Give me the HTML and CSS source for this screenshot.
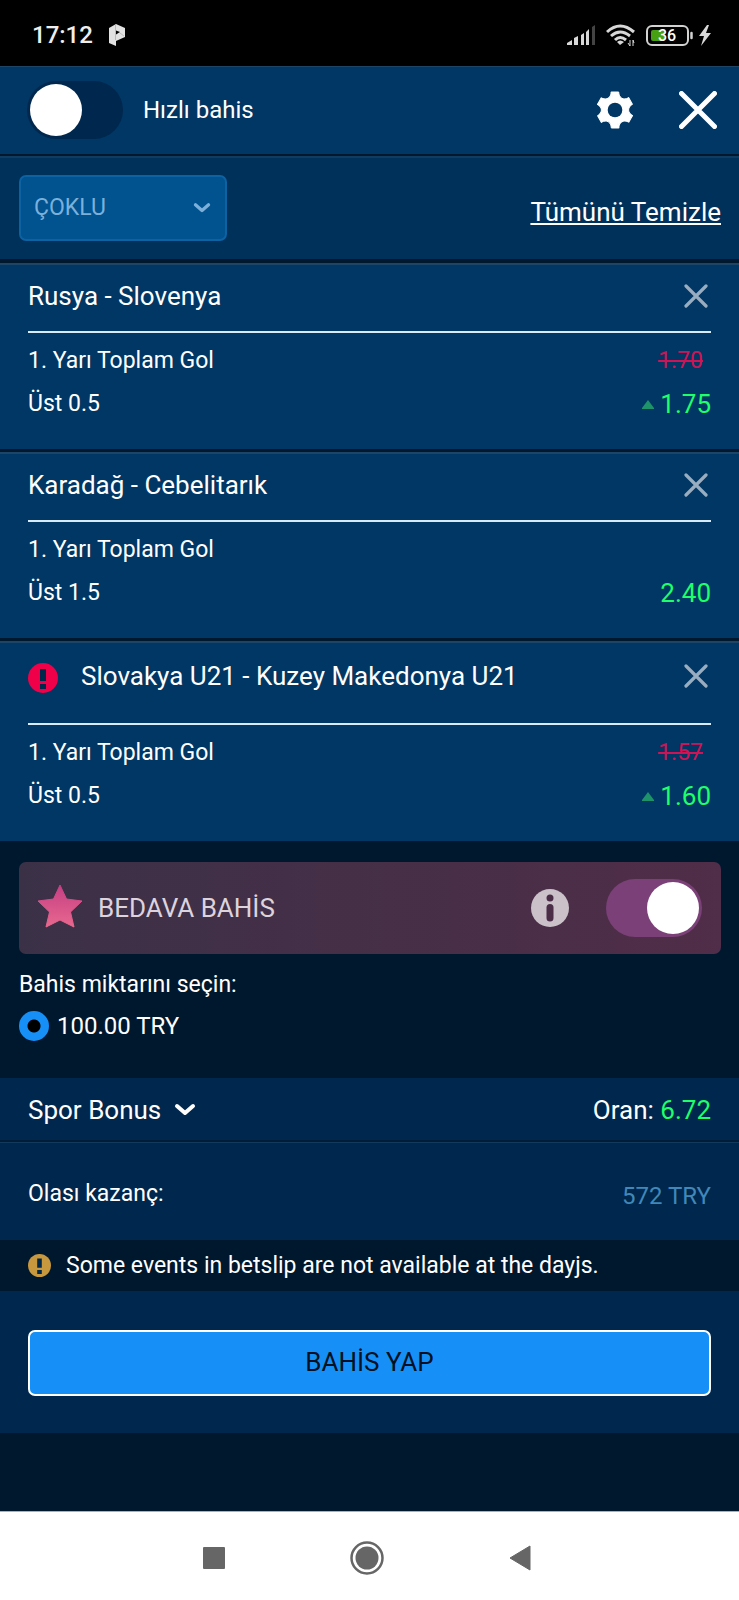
FILE: index.html
```html
<!DOCTYPE html>
<html lang="tr">
<head>
<meta charset="utf-8">
<meta name="viewport" content="width=device-width, initial-scale=1">
<title>Bahis kuponu</title>
<link rel="stylesheet" href="styles.css">
</head>
<body>
<svg class="defs" aria-hidden="true">
  <defs>
    <symbol id="cross" viewBox="0 0 24 24"><path d="M2 2 22 22M22 2 2 22" fill="none" stroke="currentColor" stroke-width="3.2" stroke-linecap="round"/></symbol>
    <symbol id="chevron" viewBox="0 0 22 14"><path d="M3 3 11 10 19 3" fill="none" stroke="currentColor" stroke-width="4" stroke-linecap="round" stroke-linejoin="round"/></symbol>
    <symbol id="alert" viewBox="0 0 30 30"><circle cx="15" cy="15" r="15" fill="currentColor"/><path class="cutout" d="M12 6h6v12h-6zM12 21h6v5h-6z"/></symbol>
    <symbol id="up" viewBox="0 0 12 10"><path d="M6 0 12 8V9H0V8Z" fill="currentColor"/></symbol>
    <path id="tooth" d="M0 0-11-54H11C12-36 25-28 41-37Z"/>
  </defs>
</svg>

<div class="status">
  <time class="clock">17:12</time>
  <svg class="status-app" width="18" height="24" viewBox="0 0 18 24"><path d="M1 5 8 1 17 5V14L8 18V23L1 20Z" fill="#e2e2e2"/><path d="M7.500 1V17M12 10 16 13" stroke="#aaa" stroke-width=".7"/><path d="M8 7.500 12 9 8 11.500Z" fill="#000"/></svg>
  <span class="status-icons">
    <svg width="28" height="20" viewBox="0 0 28 20"><path d="M0 20V18L5 15V20ZM7 20V13L11 11V20ZM14 20V10L17 8V20ZM19 20V7L22 4V20Z" fill="#d8d8d8"/><path d="M25 20V2L28 0V20Z" fill="#444"/></svg>
    <svg width="29" height="23" viewBox="0 0 29 23"><g fill="none" stroke="#d8d8d8" stroke-width="3"><path d="M1 8Q14 -4 28 8"/><path d="M5 12Q14 4 24 12"/><path d="M9 16Q14 11 20 16"/></g><path d="M11 18Q14 15 18 18L14 21Z" fill="#d8d8d8"/><path d="M24 16V22M22 19 24 22M27 22V16L28 19" stroke="#d8d8d8" stroke-width="1" fill="none"/></svg>
    <span class="power">
      <svg width="47" height="21" viewBox="0 0 47 21"><rect x="1" y="1" width="41" height="19" rx="5" fill="none" stroke="#d2d2d2" stroke-width="2"/><rect x="5" y="5" width="13" height="11" rx="2" fill="#46a012"/><path d="M45.500 8V13" stroke="#d2d2d2" stroke-width="2.500" stroke-linecap="round"/><text class="battery-text" x="21" y="16" text-anchor="middle">36</text></svg>
      <svg width="12" height="21" viewBox="0 0 12 21"><path d="M8 0 0 11H5L2 21 12 8H7L10 0Z" fill="#d8d8d8"/></svg>
    </span>
  </span>
</div>

<header class="header">
  <input class="toggle" type="checkbox" role="switch" id="quick">
  <label class="header-label" for="quick">Hızlı bahis</label>
  <button class="icon-btn" type="button" aria-label="Ayarlar">
    <svg width="36" height="38" viewBox="-54 -57 108 114"><g fill="#fff" stroke="#fff" stroke-width="3" stroke-linejoin="round"><circle r="38"/><use href="#tooth"/><use href="#tooth" transform="rotate(60)"/><use href="#tooth" transform="rotate(120)"/><use href="#tooth" transform="rotate(180)"/><use href="#tooth" transform="rotate(240)"/><use href="#tooth" transform="rotate(300)"/></g><circle class="gear-hole" r="22"/></svg>
  </button>
  <button class="icon-btn" type="button" aria-label="Kapat">
    <svg width="38" height="38" viewBox="0 0 38 38"><path d="M2.500 2.500 35.500 35.500M35.500 2.500 2.500 35.500" stroke="#fff" stroke-width="5" stroke-linecap="round"/></svg>
  </button>
</header>

<div class="toolbar">
  <div class="picker">
    <select class="picker-select" aria-label="Kupon türü"><option>ÇOKLU</option></select>
    <svg class="picker-arrow" width="18" height="12"><use href="#chevron"/></svg>
  </div>
  <a class="clear" href="#">Tümünü Temizle</a>
</div>

<main class="slip">
  <article class="event">
    <div class="event-head"><h2 class="event-title">Rusya - Slovenya</h2><button class="remove" type="button" aria-label="Kaldır"><svg width="24" height="24"><use href="#cross"/></svg></button></div>
    <div class="event-row"><span>1. Yarı Toplam Gol</span><s class="old">1.70</s></div>
    <div class="event-row"><span>Üst 0.5</span><span class="odds"><svg class="up" width="12" height="10"><use href="#up"/></svg>1.75</span></div>
  </article>
  <article class="event">
    <div class="event-head"><h2 class="event-title">Karadağ - Cebelitarık</h2><button class="remove" type="button" aria-label="Kaldır"><svg width="24" height="24"><use href="#cross"/></svg></button></div>
    <div class="event-row"><span>1. Yarı Toplam Gol</span></div>
    <div class="event-row"><span>Üst 1.5</span><span class="odds">2.40</span></div>
  </article>
  <article class="event">
    <div class="event-head event-head-alert"><svg class="event-alert" width="30" height="30"><use href="#alert"/></svg><h2 class="event-title">Slovakya U21 - Kuzey Makedonya U21</h2><button class="remove" type="button" aria-label="Kaldır"><svg width="24" height="24"><use href="#cross"/></svg></button></div>
    <div class="event-row"><span>1. Yarı Toplam Gol</span><s class="old">1.57</s></div>
    <div class="event-row"><span>Üst 0.5</span><span class="odds"><svg class="up" width="12" height="10"><use href="#up"/></svg>1.60</span></div>
  </article>
</main>

<section class="free">
  <div class="free-bar">
    <svg class="star" width="46" height="44" viewBox="0 0 46 44"><defs><linearGradient id="pink" x1="0" y1="0" x2="0" y2="1"><stop offset="0" stop-color="#c53f84"/><stop offset="1" stop-color="#e8688e"/></linearGradient></defs><path d="M23 1 29.500 15 45 17 33.500 28 37 43 23 36 9 43 12.500 28 1 17 16.500 15Z" fill="url(#pink)" stroke="url(#pink)" stroke-width="1" stroke-linejoin="round"/></svg>
    <label class="free-label" for="free">BEDAVA BAHİS</label>
    <button class="icon-btn" type="button" aria-label="Bilgi"><svg width="38" height="38" viewBox="0 0 38 38"><circle cx="19" cy="19" r="19" fill="#cbc1c9"/><circle cx="19" cy="9" r="3.5" fill="#4b2d48"/><path d="M19 18.500V29" stroke="#4b2d48" stroke-width="7" stroke-linecap="round"/></svg></button>
    <input class="toggle toggle-pink" type="checkbox" role="switch" id="free" checked>
  </div>
  <p class="free-hint">Bahis miktarını seçin:</p>
  <label class="amount"><input class="radio" type="radio" name="amount" checked>100.00 TRY</label>
</section>

<section class="summary">
  <div class="bonus-row">
    <button class="bonus" type="button">Spor Bonus<svg width="22" height="14"><use href="#chevron"/></svg></button>
    <span>Oran: <span class="total">6.72</span></span>
  </div>
  <div class="win-row"><span>Olası kazanç:</span><span class="win">572 TRY</span></div>
  <p class="warning"><svg class="warning-icon" width="23" height="23"><use href="#alert"/></svg>Some events in betslip are not available at the dayjs.</p>
  <div class="place"><button class="place-btn" type="button">BAHİS YAP</button></div>
</section>

<nav class="nav">
  <button class="nav-btn" type="button" aria-label="Son uygulamalar"><svg width="22" height="22"><rect width="22" height="22" rx="1" fill="#666"/></svg></button>
  <button class="nav-btn" type="button" aria-label="Ana ekran"><svg width="34" height="34" viewBox="0 0 34 34"><circle cx="17" cy="17" r="15.5" fill="none" stroke="#666" stroke-width="2.5"/><circle cx="17" cy="17" r="11.5" fill="#666"/></svg></button>
  <button class="nav-btn" type="button" aria-label="Geri"><svg width="22" height="26" viewBox="0 0 22 26"><path d="M1 13 21 1V25Z" fill="#666" stroke="#666" stroke-linejoin="round"/></svg></button>
</nav>
</body>
</html>
```
FILE: styles.css
```css
:root {
  --panel: #003764;
  --panel-low: #00274d;
  --edge: #1c4568;
  --dark: #00182e;
  --green: #1eff6a;
}

* { box-sizing: border-box; margin: 0; }

body {
  display: flex;
  flex-direction: column;
  min-height: 100vh;
  background: var(--dark);
  color: #fff;
  font: 23px/28px Roboto, sans-serif;
}

svg { display: block; flex: none; }
button { padding: 0; border: 0; background: none; color: inherit; font: inherit; }
.defs { position: absolute; width: 0; height: 0; }

.status {
  display: flex;
  align-items: center;
  gap: 15px;
  height: 66px;
  padding: 4px 28px 0 32px;
  background: #000;
}
.clock { color: #eee; font-size: 24px; font-weight: 500; }
.status-icons { display: flex; align-items: center; gap: 11px; margin-left: auto; }
.power { display: flex; align-items: center; gap: 6px; }
.battery-text { fill: #fff; font-size: 16px; font-weight: 500; }

.header {
  display: flex;
  align-items: center;
  height: 88px;
  padding: 0 22px 2px 27px;
  border-top: 1px solid var(--edge);
  background: var(--panel);
}
.header-label { flex: 1; padding-left: 20px; font-size: 24px; }
.icon-btn + .icon-btn { margin-left: 46px; }
.gear-hole { fill: var(--panel); }

.toggle {
  display: flex;
  align-items: center;
  flex: none;
  width: 96px;
  height: 58px;
  padding: 0 3px;
  border-radius: 29px;
  appearance: none;
  background: #00274d;
}
.toggle::before { content: ""; width: 52px; height: 52px; border-radius: 50%; background: #fff; }
.toggle:checked { justify-content: flex-end; }
.toggle-pink { background: #7a4077; }

.toolbar {
  display: flex;
  align-items: center;
  justify-content: space-between;
  height: 103px;
  margin-top: 2px;
  padding: 0 18px 2px 19px;
  border-top: 2px solid #103c62;
  background: #00315b;
}
.picker { display: grid; align-items: center; width: 208px; color: #7cb0da; }
.picker-select {
  grid-area: 1 / 1;
  height: 66px;
  padding: 0 13px;
  border: 2px solid #0d62a2;
  border-radius: 7px;
  appearance: none;
  background: #00538f;
  color: inherit;
  font: inherit;
}
.picker-arrow { grid-area: 1 / 1; justify-self: end; margin-right: 16px; pointer-events: none; }
.clear { padding-top: 8px; color: #fff; font-size: 26px; }

.slip { display: grid; gap: 3px; margin-top: 4px; }
.event { padding: 0 28px 24px; border-top: 2px solid var(--edge); background: var(--panel); }
.event-head {
  display: flex;
  align-items: center;
  margin-bottom: 6px;
  padding-bottom: 4px;
  border-bottom: 2px solid #d8eaf5;
}
.event-head-alert { padding: 2px 0 16px; }
.event-alert { margin: 4px 23px 0 0; color: #f00048; }
.cutout { fill: #00284c; }
.event-title { flex: 1; font-size: 26px; font-weight: 400; line-height: 62px; }
.remove { display: grid; place-items: center; width: 30px; height: 30px; color: #99adc0; }
.event-row { display: flex; align-items: center; justify-content: space-between; height: 43px; }
.old { padding-right: 8px; color: #cf1456; }
.odds { display: flex; align-items: center; gap: 6px; color: var(--green); font-size: 26px; }
.up { margin-top: 2px; color: #1e9269; }

.free { padding: 21px 18px 37px 19px; }
.free-bar {
  display: flex;
  align-items: center;
  height: 92px;
  padding: 0 19px 0 18px;
  border-radius: 7px;
  background: linear-gradient(90deg, #3b3147, #502d48);
}
.star { margin-bottom: 4px; }
.free-label { flex: 1; padding-left: 15px; color: #ddd3dd; font-size: 26px; }
.toggle-pink { margin-left: 37px; }
.free-hint { margin: 17px 0 12px; }
.amount { display: flex; align-items: center; gap: 8px; height: 30px; font-size: 24px; }
.radio { width: 30px; height: 30px; margin: 0; border-radius: 50%; appearance: none; background: #1690f7; }
.radio:checked { background: radial-gradient(circle, #000 6px, #1690f7 7px); }

.summary { background: var(--panel-low); }
.bonus-row {
  display: flex;
  align-items: center;
  justify-content: space-between;
  height: 64px;
  padding: 2px 28px 0;
  border-bottom: 2px solid #001c38;
  font-size: 26px;
}
.bonus { display: flex; align-items: center; gap: 13px; }
.total { color: var(--green); }
.win-row {
  display: flex;
  align-items: center;
  justify-content: space-between;
  height: 98px;
  padding: 4px 28px 0;
  border-top: 1px solid #123a5c;
}
.win { padding-top: 4px; color: #4187ba; font-size: 24px; }
.warning { display: flex; align-items: center; gap: 15px; height: 51px; padding: 0 28px; background: var(--dark); }
.warning-icon { color: #c8983f; }
.place { padding: 39px 28px 37px; }
.place-btn {
  width: 100%;
  height: 66px;
  padding-bottom: 2px;
  border: 2px solid #fff;
  border-radius: 7px;
  background: #1690f7;
  color: #001022;
  font-size: 26px;
}

.nav {
  display: flex;
  justify-content: center;
  height: 89px;
  margin-top: auto;
  padding: 4px 5px 0 0;
  border-top: 1px solid #a5b3c0;
  background: #fff;
}
.nav-btn { display: grid; place-items: center; width: 153px; }
```
